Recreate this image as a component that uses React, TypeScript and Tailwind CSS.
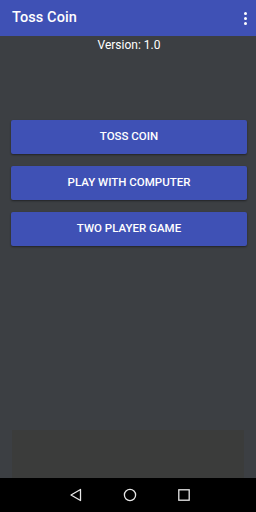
import React from "react";

const buttons = ["TOSS COIN", "PLAY WITH COMPUTER", "TWO PLAYER GAME"];

export default function App() {
  return (
    <div className="w-[256px] h-[512px] flex flex-col bg-[#3c3f43] font-['Roboto',sans-serif] overflow-hidden">
      <header className="h-[36px] bg-[#3f51b5] flex items-center justify-between pl-[12px] pr-[9px] shrink-0">
        <span className="text-white text-[14.5px] font-medium tracking-[0.1px]">Toss Coin</span>
        <div className="flex flex-col gap-[2px] items-center">
          <span className="w-[3px] h-[3px] rounded-full bg-white" />
          <span className="w-[3px] h-[3px] rounded-full bg-white" />
          <span className="w-[3px] h-[3px] rounded-full bg-white" />
        </div>
      </header>
      <main className="flex-1 flex flex-col">
        <p className="text-center text-white text-[12px] mt-[1px] leading-[16px] pl-[2px]">Version: 1.0</p>
        <div className="flex flex-col gap-[12px] pl-[11px] pr-[9px] mt-[67px]">
          {buttons.map((b) => (
            <button
              key={b}
              className="h-[34px] bg-[#3f51b5] text-white text-[11.5px] font-medium rounded-[2px] shadow-[0_1px_2px_rgba(0,0,0,0.45)]"
            >
              {b}
            </button>
          ))}
        </div>
        <div className="flex-1" />
        <div className="h-[48px] bg-[#3b3c3b] mx-[12px] shrink-0" />
      </main>
      <nav className="h-[34px] bg-black flex items-center justify-center gap-[40px] pl-[4px] shrink-0">
        <svg width="14" height="14" viewBox="0 0 14 14">
          <path d="M11.5 1.5 L2 7 L11.5 12.5 Z" fill="none" stroke="#e8e8e8" strokeWidth="1.3" strokeLinejoin="round" />
        </svg>
        <svg width="14" height="14" viewBox="0 0 14 14">
          <circle cx="7" cy="7" r="5.6" fill="none" stroke="#e8e8e8" strokeWidth="1.3" />
        </svg>
        <svg width="14" height="14" viewBox="0 0 14 14">
          <rect x="1.8" y="1.8" width="10.4" height="10.4" fill="none" stroke="#e8e8e8" strokeWidth="1.3" />
        </svg>
      </nav>
    </div>
  );
}
